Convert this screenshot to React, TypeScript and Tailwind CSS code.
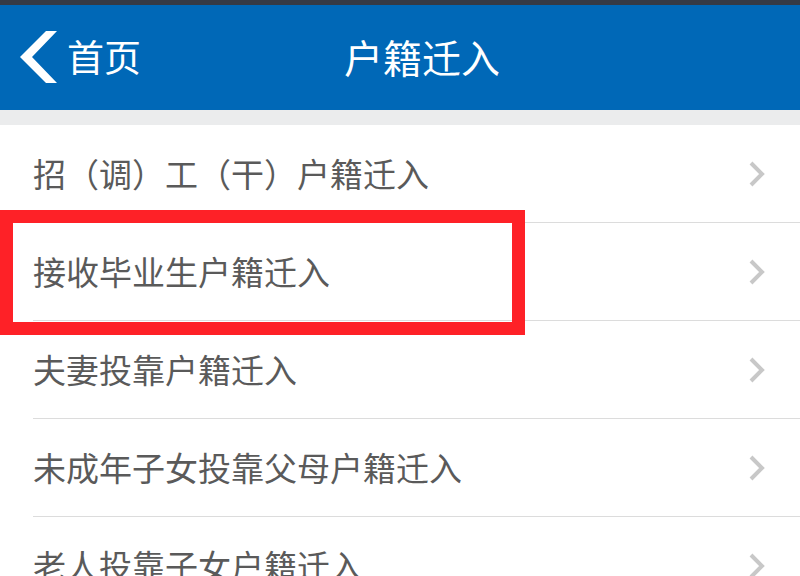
import { Fragment } from 'react';

const items = [
  '招（调）工（干）户籍迁入',
  '接收毕业生户籍迁入',
  '夫妻投靠户籍迁入',
  '未成年子女投靠父母户籍迁入',
  '老人投靠子女户籍迁入',
];

const font = { fontFamily: '"Noto Sans CJK SC", "Noto Sans", sans-serif' };

const App = () => {
  return (
    <div className="relative w-[800px] h-[576px] overflow-hidden bg-white" style={font}>
      {/* status bar strip */}
      <div className="h-[5px] bg-[#353a45]" />

      {/* Nav bar */}
      <header className="h-[105px] bg-[#0068b7] flex items-center text-white">
        <svg width="40" height="54" viewBox="0 0 40 54" className="ml-[18px] -mt-[1px] shrink-0">
          <polygon points="28,1 39,1 14,27 39,53 28,53 2,27" fill="#fff" />
        </svg>
        <span className="ml-[9px] text-[37px] leading-none -mt-[2px]">首页</span>
        <h1 className="ml-[203px] text-[39px] leading-none -mt-[2px] font-normal">户籍迁入</h1>
      </header>

      <div className="h-[15px] bg-[#ebeced]" />

      {/* List */}
      <ul>
        {items.map((t, i) => (
          <Fragment key={t}>
            <li className="h-[97px] flex items-center pl-[33px] pr-[35px]">
              <span className="flex-1 text-[33px] leading-none text-[#5a5a5a]">{t}</span>
              <svg width="16" height="26" viewBox="0 0 16 26" className="shrink-0">
                <polyline points="2,2 13,13 2,24" fill="none" stroke="#c8c8c8" strokeWidth="4" />
              </svg>
            </li>
            {i < items.length - 1 && <li className="ml-[33px] h-px bg-[#dcdcdc]" />}
          </Fragment>
        ))}
      </ul>

      {/* Highlight annotation */}
      <div className="absolute left-0 top-[210px] w-[525px] h-[125px] border-[13px] border-[#fe2127] pointer-events-none" />
    </div>
  );
};

export default App;
